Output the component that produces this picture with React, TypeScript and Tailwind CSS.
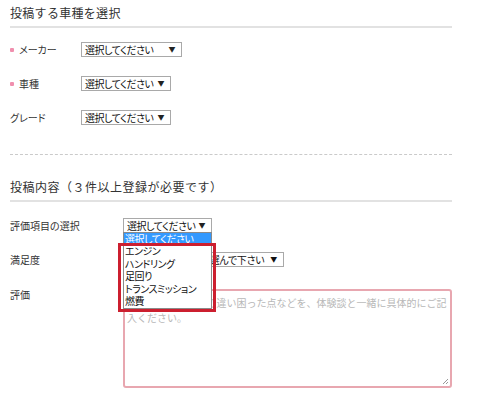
import React from "react";

const FONT = "font-['Noto_Sans_CJK_JP','Noto_Sans_CJK_SC',sans-serif]";
const PALT = "[font-feature-settings:'palt']";

function Sel({ text, className }: { text: string; className: string }) {
  return (
    <div
      className={
        "flex h-[15px] items-center border border-[#a9a9a9] bg-white pl-[3px] pr-[6px] text-[10px] leading-[13px] tracking-[-0.5px] text-[#111] " +
        PALT +
        " " +
        className
      }
    >
      <span className="flex-1 whitespace-nowrap">{text}</span>
      <span className="ml-[3px] shrink-0 text-[7px] leading-[7px] text-[#222]">▼</span>
    </div>
  );
}

function Req() {
  return <span className="mr-[5px] inline-block h-[4px] w-[4px] rounded-[1px] bg-[#f08fae]" />;
}

export default function App() {
  return (
    <div className={"min-h-[400px] w-[484px] bg-white text-[#333] " + FONT}>
      <div className="ml-[10px] w-[442px]">
        <div className="border-b-2 border-[#e2e2e2] pb-[5px] pt-[5px] text-[12px] leading-[16px] tracking-[0.3px]">
          投稿する車種を選択
        </div>

        <div className="flex flex-col gap-[19px] pt-[14px]">
          <div className="flex h-[15px] items-center">
            <div className={"flex w-[71px] items-center text-[10px] " + PALT}>
              <Req />
              メーカー
            </div>
            <Sel text="選択してください" className="w-[101px]" />
          </div>
          <div className="flex h-[15px] items-center">
            <div className={"flex w-[71px] items-center text-[10px] " + PALT}>
              <Req />
              車種
            </div>
            <Sel text="選択してください" className="w-[90px]" />
          </div>
          <div className="flex h-[15px] items-center">
            <div className={"flex w-[71px] items-center text-[10px] " + PALT}>グレード</div>
            <Sel text="選択してください" className="w-[90px]" />
          </div>
        </div>

        <div className="mt-[29px] border-t border-dashed border-[#cacaca]" />

        <div className="border-b-2 border-[#e2e2e2] pb-[5px] pt-[24px] text-[12px] leading-[16px] tracking-[0.5px]">
          投稿内容（３件以上登録が必要です）
        </div>

        <div className="mt-[16px] flex h-[15px] items-center">
          <div className={"w-[113px] text-[10px] " + PALT}>評価項目の選択</div>
          <div className="relative z-10">
            <Sel text="選択してください" className="w-[89px]" />
            <div
              className={
                "absolute left-0 top-[14px] w-[89px] border border-[#8a8a8a] bg-white text-[10px] leading-[12.5px] tracking-[-0.5px] text-[#111] " +
                PALT
              }
            >
              <div className="h-[12px] bg-[#3399ff] pl-[1px] leading-[12px] text-white">選択してください</div>
              <div className="pl-[1px]">エンジン</div>
              <div className="pl-[1px]">ハンドリング</div>
              <div className="pl-[1px]">足回り</div>
              <div className="pl-[1px]">トランスミッション</div>
              <div className="pl-[1px]">燃費</div>
            </div>
            <div className="absolute left-[-5px] top-[25px] h-[69px] w-[98px] border-[3px] border-[#cc1f2f]" />
          </div>
        </div>

        <div className="mt-[19px] flex h-[15px] items-center">
          <div className={"w-[113px] text-[10px] " + PALT}>満足度</div>
          <div
            className={
              "flex h-[15px] w-[161px] items-center border border-[#a9a9a9] bg-white pr-[6px] text-[10px] tracking-[-0.3px] text-[#111] " +
              PALT
            }
          >
            <span className="flex-1 whitespace-nowrap pr-[6px] text-right">満足度を選んで下さい</span>
            <span className="text-[7px] leading-[7px]">▼</span>
          </div>
        </div>

        <div className="mt-[22px] flex items-start">
          <div className={"w-[113px] text-[10px] leading-[12px] " + PALT}>評価</div>
          <div className="relative h-[99px] w-[329px] rounded-[3px] border-2 border-[#e8a7b0] px-[2px] pt-[4px] text-[10px] leading-[15px] text-[#b8b8b8]">
            <div className="overflow-hidden whitespace-nowrap">
              良い点や、他車との違い困った点などを、体験談と一緒に具体的にご記
            </div>
            <div>入ください。</div>
            <svg className="absolute bottom-[1px] right-[1px]" width="7" height="7" viewBox="0 0 7 7">
              <path d="M6 1 L1 6 M6 4 L4 6" stroke="#999" strokeWidth="1" />
            </svg>
          </div>
        </div>
      </div>
    </div>
  );
}
